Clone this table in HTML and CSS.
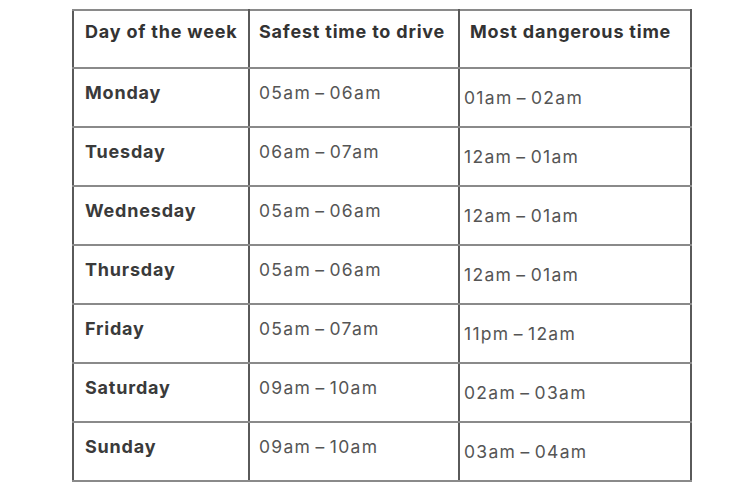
FILE: index.html
```html
<!DOCTYPE html>
<html>
<head>
<meta charset="utf-8">
<link rel="stylesheet" href="styles.css">
</head>
<body>
<table class="times">
  <colgroup>
    <col class="c1"><col class="c2"><col class="c3">
  </colgroup>
  <thead>
    <tr class="head">
      <th class="day">Day of the week</th>
      <th class="safe">Safest time to drive</th>
      <th class="danger">Most dangerous time</th>
    </tr>
  </thead>
  <tbody>
    <tr><td class="day">Monday</td><td class="safe">05am – 06am</td><td class="danger">01am – 02am</td></tr>
    <tr><td class="day">Tuesday</td><td class="safe">06am – 07am</td><td class="danger">12am – 01am</td></tr>
    <tr><td class="day">Wednesday</td><td class="safe">05am – 06am</td><td class="danger">12am – 01am</td></tr>
    <tr><td class="day">Thursday</td><td class="safe">05am – 06am</td><td class="danger">12am – 01am</td></tr>
    <tr><td class="day">Friday</td><td class="safe">05am – 07am</td><td class="danger">11pm – 12am</td></tr>
    <tr><td class="day">Saturday</td><td class="safe">09am – 10am</td><td class="danger">02am – 03am</td></tr>
    <tr><td class="day">Sunday</td><td class="safe">09am – 10am</td><td class="danger">03am – 04am</td></tr>
  </tbody>
</table>
</body>
</html>
```

FILE: styles.css
```css
html, body {
  margin: 0;
  padding: 0;
  background: #ffffff;
}
body {
  padding: 9px 0 0 72px;
  font-family: Inter, "Open Sans", sans-serif;
}
.times {
  border-collapse: collapse;
  table-layout: fixed;
  width: 618px;
}
.c1 { width: 176px; }
.c2 { width: 210px; }
.c3 { width: 232px; }
.times th, .times td {
  border-top: 2px solid #8a8a8a;
  border-bottom: 2px solid #8a8a8a;
  border-left: 2px solid #5a5a5a;
  border-right: 2px solid #5a5a5a;
  vertical-align: top;
  text-align: left;
  line-height: 22px;
  padding: 0;
  white-space: nowrap;
}
.times tr { height: 59px; }
.times tr.head { height: 58px; }
.times th {
  font-size: 18px;
  letter-spacing: 0.8px;
  font-weight: 700;
  color: #333;
  padding-top: 10px;
}
.times td {
  font-size: 17.5px;
  letter-spacing: 1.3px;
  word-spacing: -2px;
  color: #555;
  padding-top: 13px;
}
.times td.day {
  font-size: 18px;
  letter-spacing: 0.8px;
  word-spacing: 0;
  font-weight: 700;
  color: #3a3a3a;
}
.day { padding-left: 11px !important; }
.safe { padding-left: 9px !important; }
th.danger { padding-left: 10px !important; }
td.danger {
  padding-left: 4px !important;
  padding-top: 18px !important;
}
```
